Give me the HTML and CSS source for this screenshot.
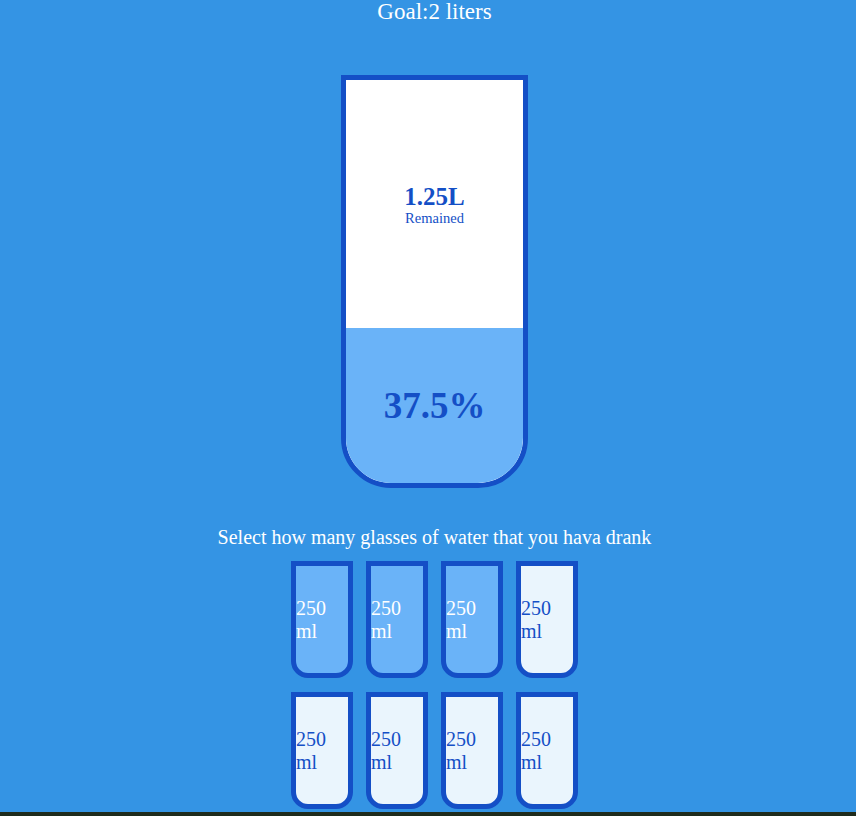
FILE: index.html
```html
<!DOCTYPE html>
<html lang="en">
<head>
<meta charset="UTF-8">
<title>Drink Water</title>
<link rel="stylesheet" href="styles.css">
</head>
<body>
<main class="app">
  <h1 class="goal">Goal:2 liters</h1>
  <div class="cup">
    <div class="remained">
      <span class="liters">1.25L</span>
      <small class="remained-label">Remained</small>
    </div>
    <div class="percentage">37.5%</div>
  </div>
  <p class="text">Select how many glasses of water that you hava drank</p>
  <div class="cups">
    <div class="cup-small full">250 ml</div>
    <div class="cup-small full">250 ml</div>
    <div class="cup-small full">250 ml</div>
    <div class="cup-small">250 ml</div>
    <div class="cup-small">250 ml</div>
    <div class="cup-small">250 ml</div>
    <div class="cup-small">250 ml</div>
    <div class="cup-small">250 ml</div>
  </div>
</main>
</body>
</html>
```
FILE: styles.css
```css
html {
  background: #1f2b1c;
}
body {
  margin: 0;
  height: 812px;
  background: #3494e4;
  color: #fff;
  font-family: "Liberation Serif", "Times New Roman", serif;
  overflow: hidden;
}
.app {
  margin-left: 13px;
  display: flex;
  flex-direction: column;
  align-items: center;
}
.goal {
  margin: 0;
  font-size: 23px;
  font-weight: normal;
  line-height: 24px;
}
.cup {
  margin-top: 51px;
  width: 177px;
  height: 403px;
  border: 5px solid #144fc6;
  border-radius: 0 0 50px 50px;
  background: #fff;
  color: #144fc6;
  overflow: hidden;
  display: flex;
  flex-direction: column;
}
.remained {
  flex: 1;
  display: flex;
  flex-direction: column;
  align-items: center;
  justify-content: center;
}
.liters {
  font-size: 25px;
  font-weight: bold;
  line-height: 27px;
}
.remained-label {
  font-size: 14.5px;
  line-height: 16px;
}
.percentage {
  height: 155px;
  background: #6ab3f8;
  display: flex;
  align-items: center;
  justify-content: center;
  font-size: 37px;
  font-weight: bold;
}
.text {
  margin: 37px 0 0;
  font-size: 20px;
  line-height: 24px;
}
.cups {
  margin-top: 12px;
  display: grid;
  grid-template-columns: repeat(4, 62px);
  column-gap: 13px;
  row-gap: 14px;
}
.cup-small {
  box-sizing: border-box;
  width: 62px;
  height: 117px;
  border: 5px solid #144fc6;
  border-radius: 0 0 17px 17px;
  background: #eaf5fd;
  color: #144fc6;
  font-size: 20px;
  display: flex;
  flex-direction: column;
  justify-content: center;
}
.cup-small.full {
  background: #6ab3f8;
  color: #fff;
}
```
